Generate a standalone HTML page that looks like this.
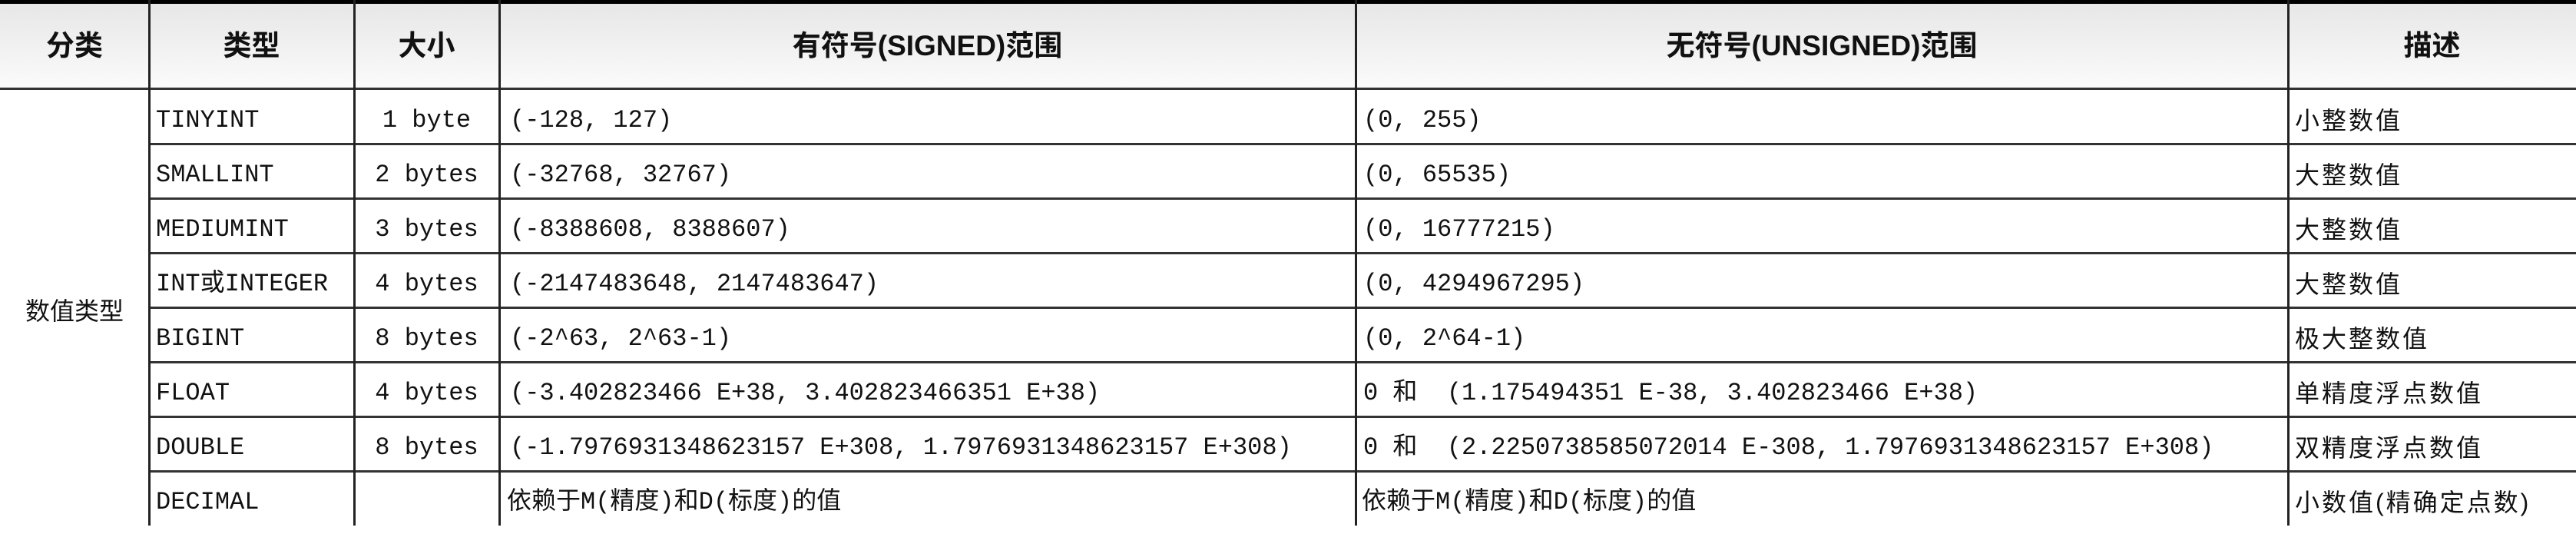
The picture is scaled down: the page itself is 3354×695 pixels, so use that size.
<!DOCTYPE html>
<html><head><meta charset="utf-8"><style>
*{margin:0;padding:0;box-sizing:border-box}
body{width:3354px;height:684px;background:#fff;position:relative;overflow:hidden;font-family:"Liberation Mono","Noto Sans CJK SC",monospace;color:#111}
.hdr{position:absolute;left:0;top:0;width:3354px;height:116px;background:linear-gradient(#e6e6e6,#fbfbfb)}
.h{position:absolute;top:0;height:116px;line-height:120px;text-align:center;font-family:"Liberation Sans","Noto Sans CJK SC",sans-serif;font-weight:bold;font-size:37px;color:#111}
.vl{position:absolute;top:0;width:3px;height:684px;background:#222}
.hl{position:absolute;height:3px;background:#333}
.c{position:absolute;height:71px;line-height:82px;font-size:32px;white-space:pre}
.d{position:absolute;height:71px;line-height:82px;font-size:32px;letter-spacing:3px;font-family:"Liberation Sans","Noto Sans CJK SC",sans-serif;left:2988px}
</style></head><body>
<div class="hdr"></div>
<div style="position:absolute;left:0;top:0;width:3354px;height:5px;background:#000"></div>
<div class="h" style="left:0;width:194px">分类</div>
<div class="h" style="left:194px;width:267px">类型</div>
<div class="h" style="left:461px;width:189px">大小</div>
<div class="h" style="left:650px;width:1115px">有符号(SIGNED)范围</div>
<div class="h" style="left:1765px;width:1214px">无符号(UNSIGNED)范围</div>
<div class="h" style="left:2979px;width:375px">描述</div>

<div class="hl" style="left:0;top:114px;width:3354px"></div>
<div class="hl" style="left:194px;top:186px;width:3160px"></div>
<div class="hl" style="left:194px;top:257px;width:3160px"></div>
<div class="hl" style="left:194px;top:328px;width:3160px"></div>
<div class="hl" style="left:194px;top:399px;width:3160px"></div>
<div class="hl" style="left:194px;top:470px;width:3160px"></div>
<div class="hl" style="left:194px;top:541px;width:3160px"></div>
<div class="hl" style="left:194px;top:612px;width:3160px"></div>

<div class="vl" style="left:193px"></div>
<div class="vl" style="left:460px"></div>
<div class="vl" style="left:649px"></div>
<div class="vl" style="left:1764px"></div>
<div class="vl" style="left:2978px"></div>

<div style="position:absolute;left:0;width:194px;top:380px;height:50px;line-height:50px;text-align:center;font-family:'Liberation Sans','Noto Sans CJK SC',sans-serif;font-size:32px">数值类型</div>

<div class="c" style="left:203px;top:116px">TINYINT</div>
<div class="c" style="left:203px;top:187px">SMALLINT</div>
<div class="c" style="left:203px;top:258px">MEDIUMINT</div>
<div class="c" style="left:203px;top:329px">INT或INTEGER</div>
<div class="c" style="left:203px;top:400px">BIGINT</div>
<div class="c" style="left:203px;top:471px">FLOAT</div>
<div class="c" style="left:203px;top:542px">DOUBLE</div>
<div class="c" style="left:203px;top:613px">DECIMAL</div>

<div class="c" style="left:461px;width:189px;text-align:center;top:116px">1 byte</div>
<div class="c" style="left:461px;width:189px;text-align:center;top:187px">2 bytes</div>
<div class="c" style="left:461px;width:189px;text-align:center;top:258px">3 bytes</div>
<div class="c" style="left:461px;width:189px;text-align:center;top:329px">4 bytes</div>
<div class="c" style="left:461px;width:189px;text-align:center;top:400px">8 bytes</div>
<div class="c" style="left:461px;width:189px;text-align:center;top:471px">4 bytes</div>
<div class="c" style="left:461px;width:189px;text-align:center;top:542px">8 bytes</div>

<div class="c" style="left:664px;top:116px">(-128, 127)</div>
<div class="c" style="left:664px;top:187px">(-32768, 32767)</div>
<div class="c" style="left:664px;top:258px">(-8388608, 8388607)</div>
<div class="c" style="left:664px;top:329px">(-2147483648, 2147483647)</div>
<div class="c" style="left:664px;top:400px">(-2^63, 2^63-1)</div>
<div class="c" style="left:664px;top:471px">(-3.402823466 E+38, 3.402823466351 E+38)</div>
<div class="c" style="left:664px;top:542px">(-1.7976931348623157 E+308, 1.7976931348623157 E+308)</div>
<div class="c" style="left:660px;top:613px">依赖于M(精度)和D(标度)的值</div>

<div class="c" style="left:1775px;top:116px">(0, 255)</div>
<div class="c" style="left:1775px;top:187px">(0, 65535)</div>
<div class="c" style="left:1775px;top:258px">(0, 16777215)</div>
<div class="c" style="left:1775px;top:329px">(0, 4294967295)</div>
<div class="c" style="left:1775px;top:400px">(0, 2^64-1)</div>
<div class="c" style="left:1775px;top:471px">0 和  (1.175494351 E-38, 3.402823466 E+38)</div>
<div class="c" style="left:1775px;top:542px">0 和  (2.2250738585072014 E-308, 1.7976931348623157 E+308)</div>
<div class="c" style="left:1773px;top:613px">依赖于M(精度)和D(标度)的值</div>

<div class="d" style="top:116px">小整数值</div>
<div class="d" style="top:187px">大整数值</div>
<div class="d" style="top:258px">大整数值</div>
<div class="d" style="top:329px">大整数值</div>
<div class="d" style="top:400px">极大整数值</div>
<div class="d" style="top:471px">单精度浮点数值</div>
<div class="d" style="top:542px">双精度浮点数值</div>
<div class="d" style="top:613px">小数值(精确定点数)</div>
</body></html>
